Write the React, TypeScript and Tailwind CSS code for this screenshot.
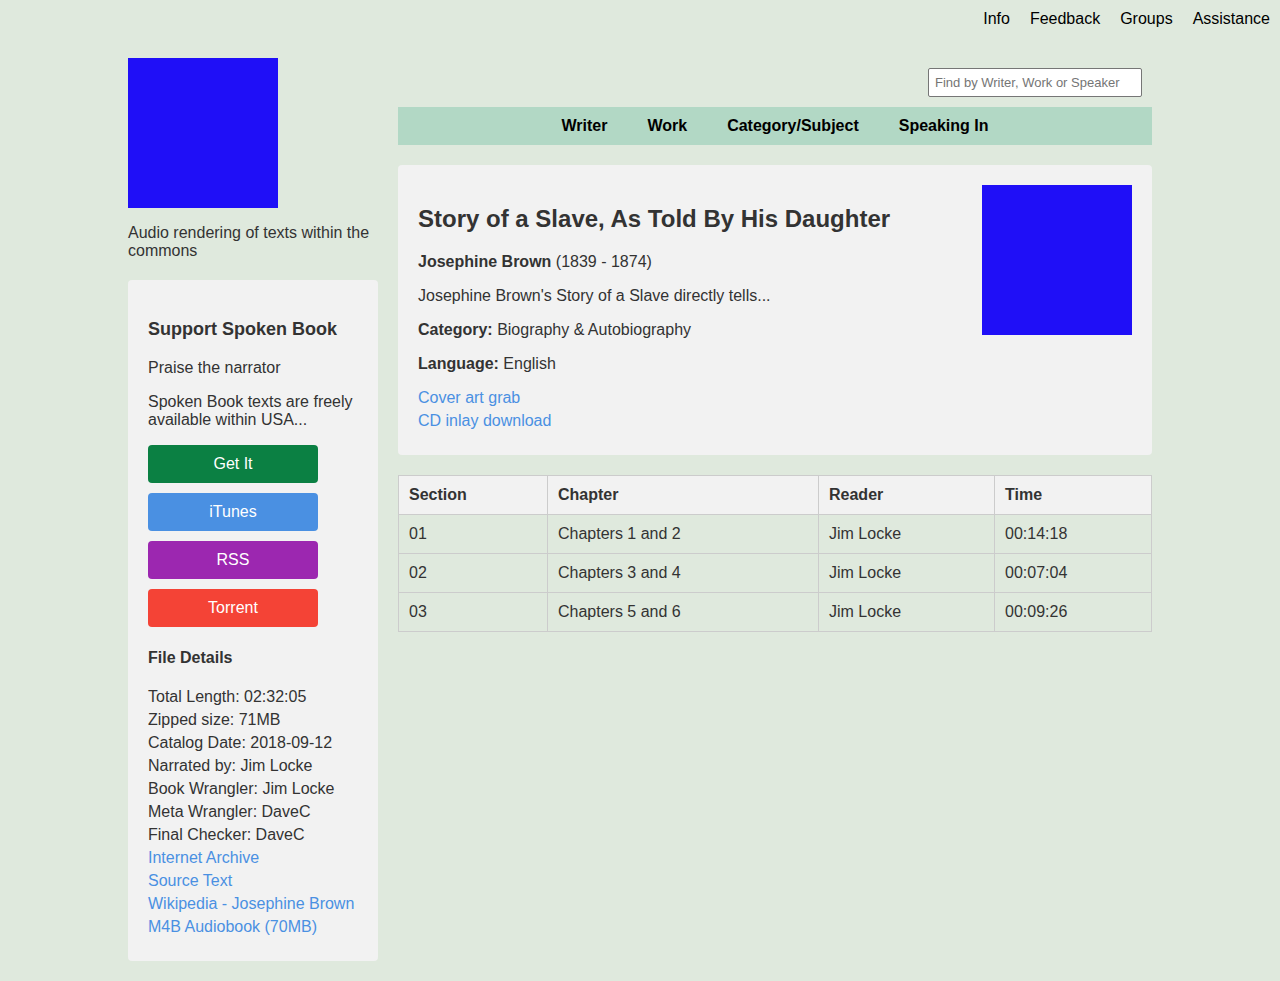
const topLinks = ['Info', 'Feedback', 'Groups', 'Assistance']

const navItems = ['Writer', 'Work', 'Category/Subject', 'Speaking In']

const buttons = [
    { label: 'Get It', className: 'bg-[#0b8043]' },
    { label: 'iTunes', className: 'bg-[#4a90e2]' },
    { label: 'RSS', className: 'bg-[#9c27b0]' },
    { label: 'Torrent', className: 'bg-[#f44336]' },
]

const fileDetails = [
    'Total Length: 02:32:05',
    'Zipped size: 71MB',
    'Catalog Date: 2018-09-12',
    'Narrated by: Jim Locke',
    'Book Wrangler: Jim Locke',
    'Meta Wrangler: DaveC',
    'Final Checker: DaveC',
]

const fileLinks = ['Internet Archive', 'Source Text', 'Wikipedia - Josephine Brown', 'M4B Audiobook (70MB)']

const sections = [
    { section: '01', chapter: 'Chapters 1 and 2', reader: 'Jim Locke', time: '00:14:18' },
    { section: '02', chapter: 'Chapters 3 and 4', reader: 'Jim Locke', time: '00:07:04' },
    { section: '03', chapter: 'Chapters 5 and 6', reader: 'Jim Locke', time: '00:09:26' },
]

const Sidebar = () => (
    <aside className="w-[250px] shrink-0">
        <div className="w-[150px] h-[150px] bg-[#1f0ff7]" />
        <p className="mt-4 leading-[18px]">Audio rendering of texts within the commons</p>

        <div className="mt-5 bg-[#f2f2f2] rounded p-5">
            <h3 className="mt-[19px] text-[18px] font-bold leading-[21px]">Support Spoken Book</h3>
            <p className="mt-[19px] leading-[18px]">Praise the narrator</p>
            <p className="mt-4 leading-[18px]">Spoken Book texts are freely available within USA...</p>

            <div className="mt-4 flex flex-col gap-[10px]">
                {buttons.map(({ label, className }) => (
                    <a
                        key={label}
                        href="#"
                        className={`${className} w-[170px] h-[38px] flex items-center justify-center rounded text-white`}
                    >
                        {label}
                    </a>
                ))}
            </div>

            <h4 className="mt-[22px] font-bold leading-[18px]">File Details</h4>
            <ul className="mt-[18px] leading-[23px] mb-[3px]">
                {fileDetails.map((line) => (
                    <li key={line}>{line}</li>
                ))}
                {fileLinks.map((line) => (
                    <li key={line}>
                        <a href="#" className="text-[#4a90e2]">
                            {line}
                        </a>
                    </li>
                ))}
            </ul>
        </div>
    </aside>
)

const BookCard = () => (
    <section className="mt-5 bg-[#f2f2f2] rounded p-5 flex justify-between">
        <div>
            <h2 className="mt-5 text-[24px] font-bold leading-[28px]">Story of a Slave, As Told By His Daughter</h2>
            <p className="mt-5 leading-[18px]">
                <b>Josephine Brown</b> (1839 - 1874)
            </p>
            <p className="mt-4 leading-[18px]">Josephine Brown's Story of a Slave directly tells...</p>
            <p className="mt-4 leading-[18px]">
                <b>Category:</b> Biography &amp; Autobiography
            </p>
            <p className="mt-4 leading-[18px]">
                <b>Language:</b> English
            </p>
            <div className="mt-4 leading-[18px]">
                <a href="#" className="block text-[#4a90e2] mb-[5px]">
                    Cover art grab
                </a>
                <a href="#" className="block text-[#4a90e2] mb-[5px]">
                    CD inlay download
                </a>
            </div>
        </div>
        <div className="w-[150px] h-[150px] bg-[#1f0ff7] shrink-0" />
    </section>
)

const SectionTable = () => (
    <table className="mt-5 w-full border-collapse leading-[18px]">
        <thead>
            <tr className="bg-[#f2f2f2]">
                <th className="w-[149px] border border-[#cccccc] p-[10px] text-left font-bold">Section</th>
                <th className="w-[271px] border border-[#cccccc] p-[10px] text-left font-bold">Chapter</th>
                <th className="w-[176px] border border-[#cccccc] p-[10px] text-left font-bold">Reader</th>
                <th className="border border-[#cccccc] p-[10px] text-left font-bold">Time</th>
            </tr>
        </thead>
        <tbody>
            {sections.map((row) => (
                <tr key={row.section}>
                    <td className="border border-[#cccccc] p-[10px]">{row.section}</td>
                    <td className="border border-[#cccccc] p-[10px]">{row.chapter}</td>
                    <td className="border border-[#cccccc] p-[10px]">{row.reader}</td>
                    <td className="border border-[#cccccc] p-[10px]">{row.time}</td>
                </tr>
            ))}
        </tbody>
    </table>
)

export default function App() {
    return (
        <div className="min-h-[981px] bg-[#dfe9dd] text-[#333333] text-[16px] leading-[1.15] font-['Liberation_Sans',Arial,sans-serif]">
            <nav className="h-[38px] flex items-center justify-end gap-5 pr-[10px] text-black">
                {topLinks.map((item) => (
                    <a key={item} href="#">
                        {item}
                    </a>
                ))}
            </nav>

            <div className="w-[1024px] mx-auto pt-5 flex gap-5">
                <Sidebar />

                <main className="flex-1 min-w-0">
                    <div className="mt-[10px] flex justify-end pr-[10px]">
                        <input
                            type="text"
                            placeholder="Find by Writer, Work or Speaker"
                            className="w-[214px] h-[29px] px-[6px] bg-white border border-[#767676] rounded-[2px] text-[13px] placeholder:text-[#757575] text-black"
                        />
                    </div>

                    <div className="mt-[10px] h-[38px] bg-[#b2d8c5] flex items-center justify-center font-bold text-black">
                        {navItems.map((item) => (
                            <a key={item} href="#" className="px-5">
                                {item}
                            </a>
                        ))}
                    </div>

                    <BookCard />
                    <SectionTable />
                </main>
            </div>
        </div>
    )
}
